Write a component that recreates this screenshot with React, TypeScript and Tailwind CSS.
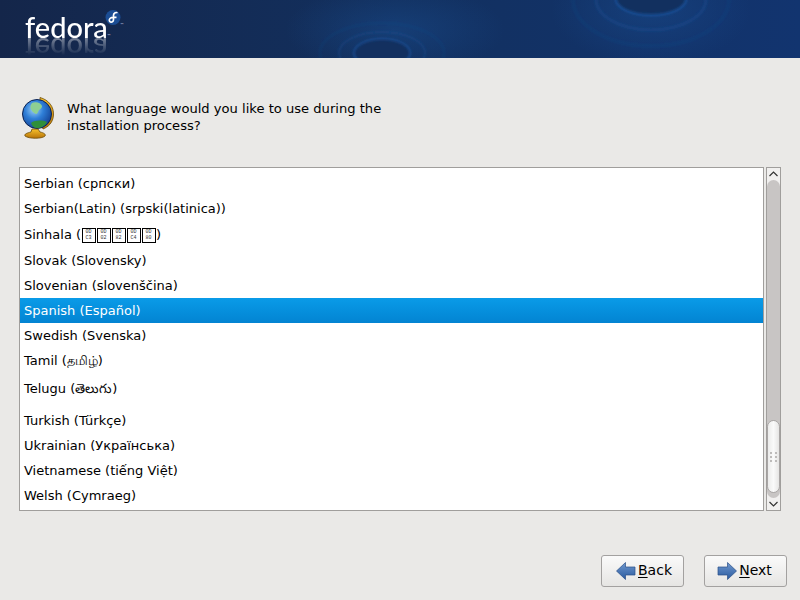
const rows: { label: React.ReactNode; h: string; selected?: boolean }[] = [
  { label: "Serbian (српски)", h: "h-[25px]" },
  { label: "Serbian(Latin) (srpski(latinica))", h: "h-[25px]" },
  {
    label: (
      <>
        Sinhala (
        <Tofu a="0D" b="C3" />
        <Tofu a="0D" b="02" />
        <Tofu a="0D" b="82" />
        <Tofu a="0D" b="C4" />
        <Tofu a="0D" b="80" />)
      </>
    ),
    h: "h-[27px]",
  },
  { label: "Slovak (Slovensky)", h: "h-[25px]" },
  { label: "Slovenian (slovenščina)", h: "h-[25px]" },
  { label: "Spanish (Español)", h: "h-[25px]", selected: true },
  { label: "Swedish (Svenska)", h: "h-[25px]" },
  { label: "Tamil (தமிழ்)", h: "h-[25px]" },
  { label: "Telugu (తెలుగు)", h: "h-[35px] pb-[4px]" },
  { label: "Turkish (Türkçe)", h: "h-[25px]" },
  { label: "Ukrainian (Українська)", h: "h-[25px]" },
  { label: "Vietnamese (tiếng Việt)", h: "h-[25px]" },
  { label: "Welsh (Cymraeg)", h: "h-[25px]" },
];

function Tofu({ a, b }: { a: string; b: string }) {
  return (
    <span className="mx-[0.5px] inline-flex h-[15px] w-[14px] flex-col items-center justify-center border border-black align-middle font-['Liberation_Mono',monospace] text-[5px] leading-[6px] text-[#333]">
      <span>{a}</span>
      <span>{b}</span>
    </span>
  );
}

function Header() {
  return (
    <header className="relative h-[58px] shrink-0 overflow-hidden bg-gradient-to-r from-[#14264a] via-[#12305f] to-[#12346f]">
      <svg className="absolute inset-0" width="800" height="58" fill="none" stroke="#1d55a0">
        <defs>
          <radialGradient id="glow">
            <stop offset="0" stopColor="#1a4f92" stopOpacity="0.45" />
            <stop offset="1" stopColor="#1a4f92" stopOpacity="0" />
          </radialGradient>
          <filter id="soft">
            <feGaussianBlur stdDeviation="0.8" />
          </filter>
        </defs>
        <ellipse cx="395" cy="30" rx="110" ry="45" fill="url(#glow)" stroke="none" />
        <ellipse cx="651" cy="10" rx="100" ry="55" fill="url(#glow)" stroke="none" />
        <ellipse cx="651" cy="-1" rx="35" ry="16" fill="#12305f" stroke="none" />
        <ellipse cx="382" cy="53" rx="28" ry="14" fill="#13305f" stroke="none" />
        <g filter="url(#soft)">
          <ellipse cx="651" cy="-1" rx="35" ry="16" strokeWidth="2.500" strokeOpacity="0.7" />
          <ellipse cx="651" cy="-1" rx="55" ry="31" strokeWidth="3" strokeOpacity="0.3" />
          <ellipse cx="651" cy="-1" rx="78" ry="47" strokeWidth="4" strokeOpacity="0.12" />
          <ellipse cx="382" cy="53" rx="28" ry="14" strokeWidth="2" strokeOpacity="0.65" />
          <ellipse cx="382" cy="53" rx="43" ry="21" strokeWidth="2" strokeOpacity="0.28" />
          <ellipse cx="382" cy="53" rx="62" ry="30" strokeWidth="3" strokeOpacity="0.12" />
        </g>
      </svg>
      <div className="absolute left-[25px] top-[12px] font-['Lato',sans-serif] text-[29px] font-medium leading-[29px] text-white [-webkit-box-reflect:below_-6px_linear-gradient(transparent_30%,rgba(255,255,255,0.5))]">
        fedora
      </div>
      <svg className="absolute left-[105px] top-[9px]" width="17" height="17" viewBox="0 0 17 17" fill="none">
        <circle cx="8" cy="8.500" r="7.500" fill="#1b4d94" />
        <path
          d="M12.500 3.800C10.500 3 8.500 4 8.500 6.500V10.500C8.500 12.500 7 13.500 5.500 13C4 12.500 4 10.500 5 9.500C5.800 8.700 7 8.300 8.500 8.300H11.500"
          stroke="#fff"
          strokeWidth="1.700"
        />
      </svg>
      <span className="absolute left-[107px] top-[34px] text-[4px] leading-[4px] text-[#c9d3e4]">™</span>
      <span className="absolute left-[120px] top-[23px] text-[4px] leading-[4px] text-[#c9d3e4]">™</span>
    </header>
  );
}

function Globe() {
  return (
    <svg width="34" height="42" viewBox="0 0 34 42" className="shrink-0">
      <defs>
        <radialGradient id="sea" cx="0.4" cy="0.35" r="0.7">
          <stop offset="0" stopColor="#9fd0f5" />
          <stop offset="0.45" stopColor="#2f7fd8" />
          <stop offset="1" stopColor="#123e90" />
        </radialGradient>
        <linearGradient id="gold" x1="0" y1="0" x2="0" y2="1">
          <stop offset="0" stopColor="#f6c02c" />
          <stop offset="1" stopColor="#b87408" />
        </linearGradient>
      </defs>
      <path d="M19 0.500C28 3 33 10 32.500 18C32 26 27 30 22 32L21 29C26 27 29 23 29 17C29 11 25 6 19 5Z" fill="url(#gold)" stroke="#6b4a08" strokeWidth="0.8" />
      <circle cx="16" cy="17" r="14.500" fill="url(#sea)" stroke="#0d2350" strokeWidth="1" />
      <path d="M11 6C15 4 20 6 21 9C21 12 18 12 17 15C16 18 14 17 12 15C10 13 8 10 11 6Z" fill="#8ecf92" />
      <path d="M10 26C14 23 21 23 26 25C24 29 20 31 16 31C13 31 11 29 10 26Z" fill="#2f8f3a" />
      <path d="M11 32H17L19 35C24 36 25 38 24 39C21 42 8 42 4 39C3 37 6 36 10 35Z" fill="url(#gold)" stroke="#6b4a08" strokeWidth="0.8" />
    </svg>
  );
}

function Scrollbar() {
  return (
    <div className="ml-[2px] flex w-[15px] flex-col border border-[#a09e9c] bg-[#f1f0ef]">
      <div className="flex h-[12px] items-center justify-center">
        <svg width="9" height="6" viewBox="0 0 9 6" fill="none">
          <path d="M0.5 5L4.500 1L8.500 5" stroke="#333" strokeWidth="1.200" />
        </svg>
      </div>
      <div className="flex flex-1 flex-col justify-end rounded-[7px] bg-[#c8c5c4] pb-[5px]">
        <div className="flex h-[73px] flex-col items-center justify-center gap-[2px] rounded-[7px] border border-[#a9a6a5] bg-gradient-to-r from-[#ececeb] via-[#fafafa] to-[#e6e5e4]">
          <div className="h-[2px] w-[7px] bg-[repeating-linear-gradient(90deg,#bdbbba_0_2px,transparent_2px_5px)]" />
          <div className="h-[2px] w-[7px] bg-[repeating-linear-gradient(90deg,#bdbbba_0_2px,transparent_2px_5px)]" />
          <div className="h-[2px] w-[7px] bg-[repeating-linear-gradient(90deg,#bdbbba_0_2px,transparent_2px_5px)]" />
        </div>
      </div>
      <div className="flex h-[12px] items-center justify-center">
        <svg width="9" height="6" viewBox="0 0 9 6" fill="none">
          <path d="M0.5 1L4.500 5L8.500 1" stroke="#333" strokeWidth="1.200" />
        </svg>
      </div>
    </div>
  );
}

function NavButton({ dir, first, rest }: { dir: "back" | "next"; first: string; rest: string }) {
  return (
    <button
      className={`flex h-[32px] w-[83px] items-center justify-center gap-[2px] rounded-[3px] border border-[#a3a1a0] bg-gradient-to-b from-[#fafafa] to-[#e6e5e3] text-[14px] text-black ${
        dir === "back" ? "pl-[3px]" : "pr-[2px]"
      }`}
    >
      <svg width="20" height="18" viewBox="0 0 20 18">
        <defs>
          <linearGradient id={dir} x1="0" y1="0" x2="0" y2="1">
            <stop offset="0" stopColor="#6f98cf" />
            <stop offset="1" stopColor="#2a5a9e" />
          </linearGradient>
        </defs>
        <path
          d={dir === "back" ? "M0.500 9L9.500 0.500V5H19V13H9.500V17.500Z" : "M19.500 9L10.500 0.500V5H1V13H10.500V17.500Z"}
          fill={`url(#${dir})`}
          stroke="#2a4f86"
          strokeWidth="0.7"
        />
      </svg>
      <span className="-mt-px">
        <span className="underline underline-offset-2">{first}</span>
        {rest}
      </span>
    </button>
  );
}

export default function App() {
  return (
    <div className="flex h-[600px] w-[800px] flex-col overflow-hidden bg-[#eae9e7] font-['DejaVu_Sans','Noto_Sans',sans-serif] text-[13px] text-black">
      <Header />
      <div className="flex h-[109px] items-start gap-[12px] pl-[21px] pt-[39px]">
        <Globe />
        <p className="mt-[3px] w-[340px] text-[13.1px] leading-[17px]">
          What language would you like to use during the installation process?
        </p>
      </div>
      <div className="ml-[19px] flex h-[344px] w-[762px]">
        <div className="flex-1 border border-[#a09e9c] bg-white pt-[3px]">
          {rows.map((row, i) => (
            <div
              key={i}
              className={`flex items-center whitespace-pre pl-[4px] ${row.h} ${
                row.selected ? "bg-gradient-to-b from-[#0a9be8] to-[#0384d2] text-white" : ""
              }`}
            >
              <span>{row.label}</span>
            </div>
          ))}
        </div>
        <Scrollbar />
      </div>
      <div className="mt-[44px] flex justify-end gap-[20px] pr-[13px]">
        <NavButton dir="back" first="B" rest="ack" />
        <NavButton dir="next" first="N" rest="ext" />
      </div>
    </div>
  );
}
